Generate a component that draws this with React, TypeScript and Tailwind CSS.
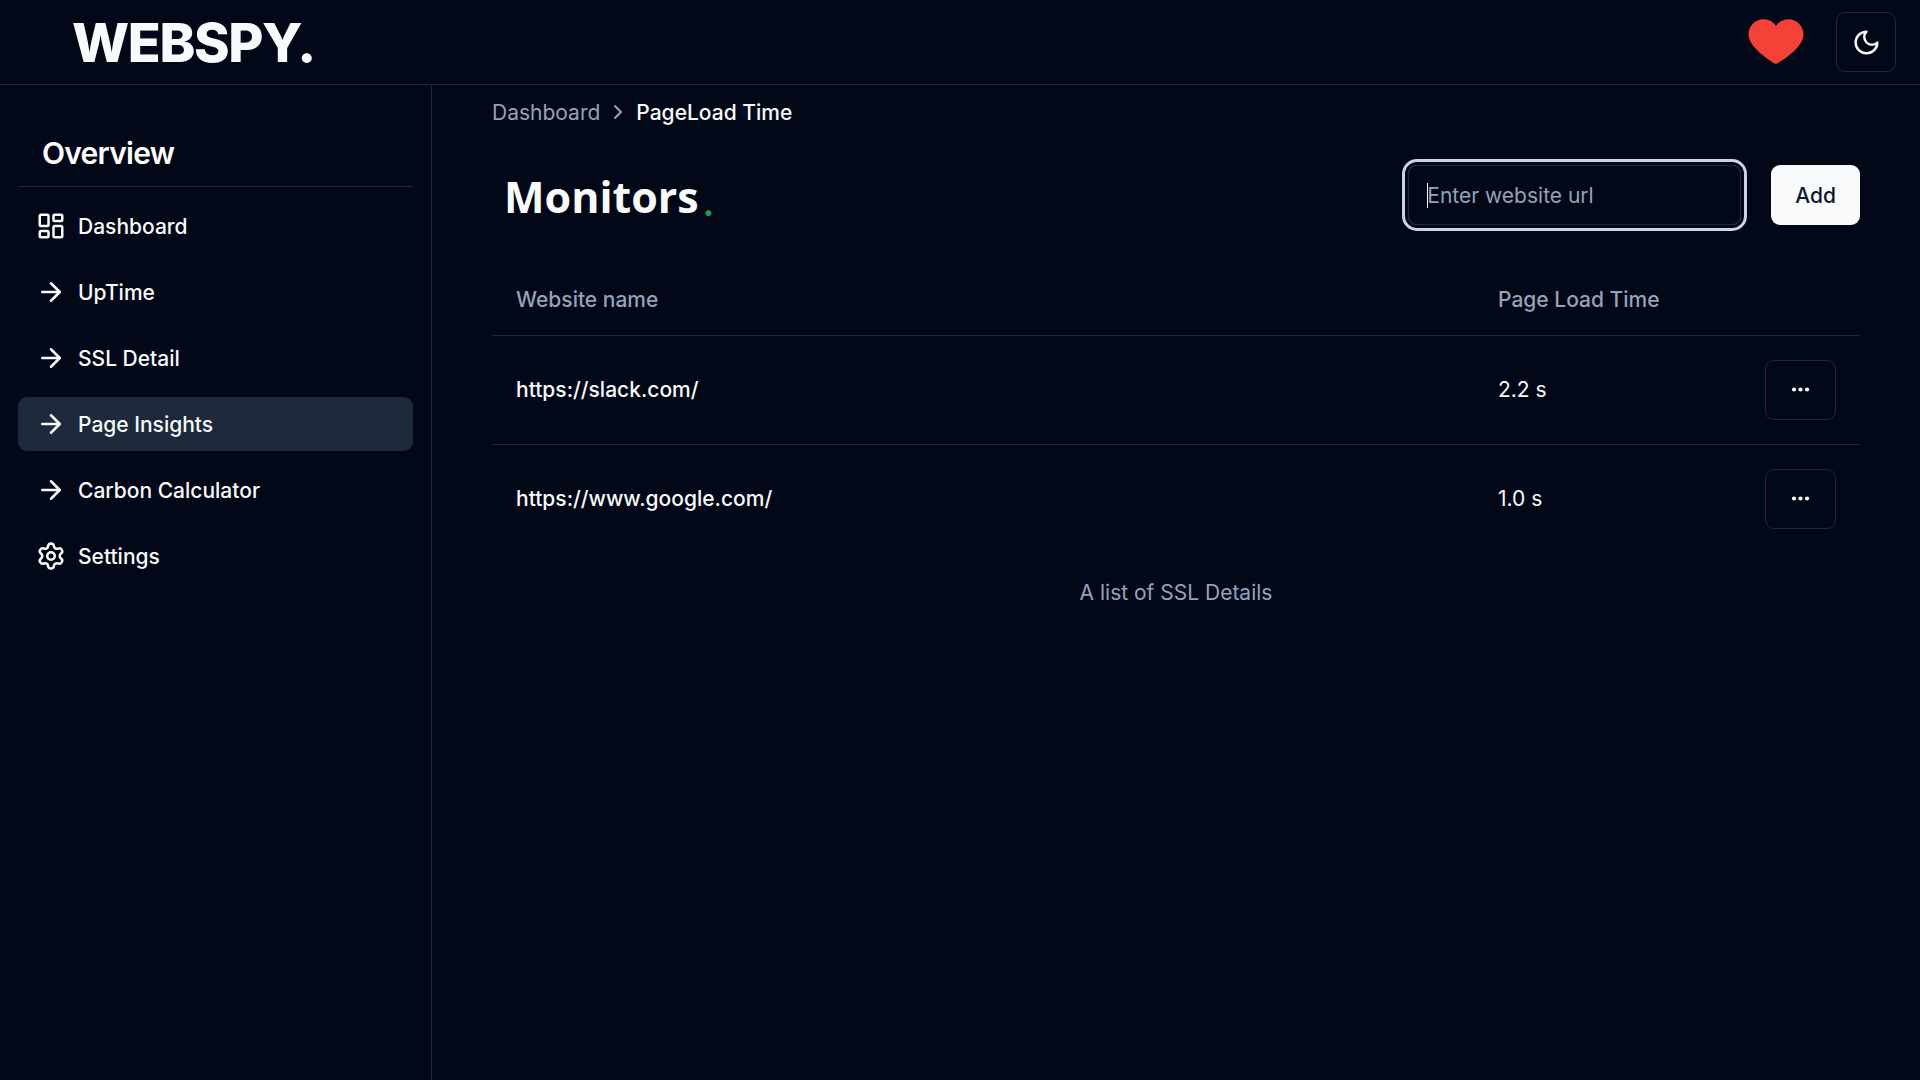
import { ArrowRight, ChevronRight, LayoutDashboard, Settings } from "lucide-react";
import type { ReactNode } from "react";
import { FcLike } from "react-icons/fc";

type NavItem = { label: string; icon: ReactNode; active?: boolean };

const arrow = <ArrowRight className="size-[30px]" />;

const navItems: NavItem[] = [
  { label: "Dashboard", icon: <LayoutDashboard className="size-[30px]" /> },
  { label: "UpTime", icon: arrow },
  { label: "SSL Detail", icon: arrow },
  { label: "Page Insights", icon: arrow, active: true },
  { label: "Carbon Calculator", icon: arrow },
  { label: "Settings", icon: <Settings className="size-[30px]" /> },
];

const monitors = [
  { url: "https://slack.com/", loadTime: "2.2 s" },
  { url: "https://www.google.com/", loadTime: "1.0 s" },
];

function MoonIcon() {
  return (
    <svg
      viewBox="0 0 24 24"
      className="size-[29px]"
      fill="none"
      stroke="currentColor"
      strokeWidth="2"
      strokeLinecap="round"
      strokeLinejoin="round"
      aria-hidden="true"
    >
      <path d="M12 3a6 6 0 0 0 9 9 9 9 0 1 1-9-9Z" />
    </svg>
  );
}

function DotsIcon() {
  return (
    <svg viewBox="0 0 24 24" className="size-[23px]" fill="currentColor" aria-hidden="true">
      <circle cx="5.2" cy="12" r="2.2" />
      <circle cx="12" cy="12" r="2.2" />
      <circle cx="18.8" cy="12" r="2.2" />
    </svg>
  );
}

function Header() {
  return (
    <header className="flex h-[85px] shrink-0 items-center justify-between border-b border-[#1e293b] pr-6 pl-[72px]">
      <a href="#" className="pt-0.5 text-[54px] leading-[60px] font-extrabold tracking-tight">
        WEBSPY.
      </a>
      <div className="flex items-center gap-[30px]">
        <a href="#" aria-label="Sponsor" className="pb-2">
          <FcLike className="size-[60px]" />
        </a>
        <button
          type="button"
          aria-label="Toggle theme"
          className="flex size-[60px] items-center justify-center rounded-[9px] border border-[#1e293b]"
        >
          <MoonIcon />
        </button>
      </div>
    </header>
  );
}

function Sidebar() {
  return (
    <aside className="w-[432px] shrink-0 border-r border-[#1e293b] px-[18px] pt-[47px]">
      <h2 className="border-b border-[#1e293b] px-6 pb-3 text-[30px] leading-[42px] font-semibold tracking-tight text-white">
        Overview
      </h2>
      <nav className="mt-3 flex flex-col gap-3">
        {navItems.map((item) => (
          <a
            key={item.label}
            href="#"
            className={
              item.active
                ? "flex h-[54px] items-center gap-3 rounded-[9px] bg-[#1e293b] px-[18px] font-medium"
                : "flex h-[54px] items-center gap-3 rounded-[9px] px-[18px] font-medium"
            }
          >
            {item.icon}
            <span>{item.label}</span>
          </a>
        ))}
      </nav>
    </aside>
  );
}

function AddMonitor() {
  return (
    <form className="flex items-center gap-[30px]" onSubmit={(e) => e.preventDefault()}>
      <div className="relative flex items-center">
        <input
          type="url"
          aria-label="Website url"
          placeholder="Enter website url"
          className="h-[60px] w-[333px] rounded-[9px] border border-[#1e293b] bg-transparent px-[18px] caret-[#f8fafc] ring-3 ring-[#cbd5e1] ring-offset-3 ring-offset-[#020817] outline-none placeholder:text-[#94a3b8]"
        />
        <span className="pointer-events-none absolute left-[19px] h-[25px] w-px bg-[#f8fafc]" />
      </div>
      <button
        type="submit"
        className="h-[60px] rounded-[9px] bg-[#f8fafc] px-6 font-medium text-[#0f172a]"
      >
        Add
      </button>
    </form>
  );
}

function MonitorTable() {
  return (
    <table className="mt-[38px] w-full caption-bottom text-left">
      <caption className="pt-6 text-[#94a3b8]">A list of SSL Details</caption>
      <thead>
        <tr className="h-[72px] border-b border-[#1e293b] text-[#94a3b8]">
          <th className="px-6 pt-0.5 font-medium">Website name</th>
          <th className="w-[267px] px-6 pt-0.5 font-medium">Page Load Time</th>
          <th className="w-[119px] px-6" aria-label="Actions" />
        </tr>
      </thead>
      <tbody>
        {monitors.map((m) => (
          <tr key={m.url} className="border-b border-[#1e293b] last:border-0">
            <td className="p-6 font-medium">{m.url}</td>
            <td className="p-6">{m.loadTime}</td>
            <td className="p-6">
              <button
                type="button"
                aria-label={`Actions for ${m.url}`}
                className="flex h-[60px] w-full items-center justify-center rounded-[9px] border border-[#1e293b]"
              >
                <DotsIcon />
              </button>
            </td>
          </tr>
        ))}
      </tbody>
    </table>
  );
}

export default function App() {
  return (
    <div className="flex min-h-screen flex-col bg-[#020817] font-['Inter',sans-serif] text-[21px] leading-[31px] text-[#f8fafc]">
      <Header />
      <div className="flex flex-1">
        <Sidebar />
        <main className="min-w-0 flex-1 px-[60px] pt-3">
          <nav aria-label="Breadcrumb" className="flex h-[30px] items-center gap-1.5">
            <a href="#" className="text-[#94a3b8]">
              Dashboard
            </a>
            <ChevronRight className="size-6 text-[#94a3b8]" strokeWidth={2} />
            <span aria-current="page" className="font-medium">
              PageLoad Time
            </span>
          </nav>
          <div className="mt-[38px] flex items-center justify-between">
            <h1 className="flex items-end pt-1 pl-3 font-['Open_Sans',sans-serif] text-[43px] leading-[54px] font-bold">
              Monitors
              <span className="pl-1 font-['Inter',sans-serif] text-[34px] leading-[40px] text-[#16a34a]">
                .
              </span>
            </h1>
            <AddMonitor />
          </div>
          <MonitorTable />
        </main>
      </div>
    </div>
  );
}
